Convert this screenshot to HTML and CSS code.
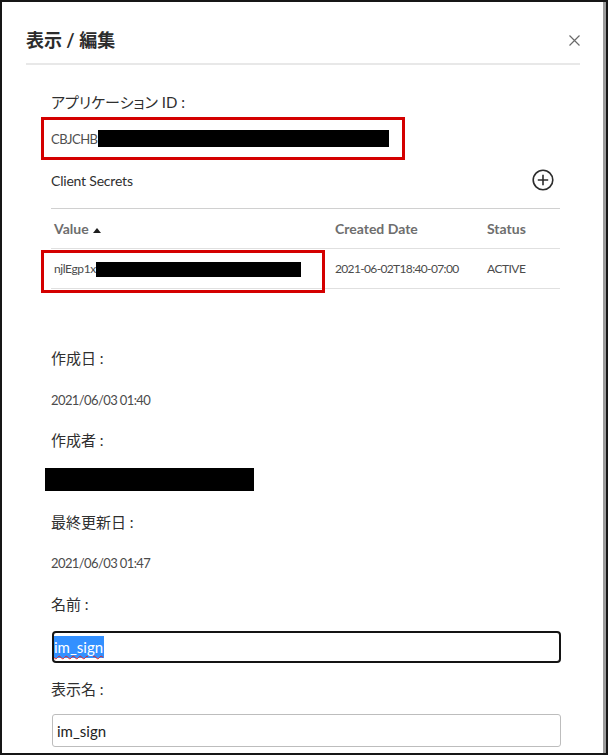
FILE: index.html
```html
<!DOCTYPE html>
<html lang="ja">
<head>
<meta charset="utf-8">
<title>表示 / 編集</title>
<link rel="stylesheet" href="styles.css">
</head>
<body>
<div class="frame">
  <div class="dialog">
    <div class="header">
      <h1 class="title">表示 / 編集</h1>
      <svg class="close" width="11" height="11" viewBox="0 0 11 11" aria-label="close">
        <path d="M0.5 0.5 L10.5 10.5 M10.5 0.5 L0.5 10.5" stroke="#6a6a6a" stroke-width="1.2" fill="none"/>
      </svg>
    </div>
    <div class="body">
      <div class="label first">アプリケーション ID :</div>
      <div class="idbox">
        <span class="idtext">CBJCHB</span><span class="redact r1"></span>
      </div>
      <div class="secrets-row">
        <span class="secrets">Client Secrets</span>
        <svg class="plus" width="22" height="22" viewBox="0 0 22 22" aria-label="add">
          <circle cx="11" cy="11" r="9.8" stroke="#2c2c2c" stroke-width="1.6" fill="none"/>
          <path d="M11 5.8 V16.2 M5.8 11 H16.2" stroke="#2c2c2c" stroke-width="1.6" fill="none"/>
        </svg>
      </div>
      <div class="table-wrap">
        <table class="tbl">
          <thead>
            <tr>
              <th class="c1">Value <span class="sort"></span></th>
              <th class="c2">Created Date</th>
              <th class="c3">Status</th>
            </tr>
          </thead>
          <tbody>
            <tr>
              <td class="c1"><span class="val">njlEgp1x</span><span class="redact r2"></span></td>
              <td class="c2 date">2021-06-02T18:40-07:00</td>
              <td class="c3 status">ACTIVE</td>
            </tr>
          </tbody>
        </table>
        <div class="mark"></div>
      </div>
      <div class="label l-created">作成日 :</div>
      <div class="value v-created">2021/06/03 01:40</div>
      <div class="label l-author">作成者 :</div>
      <div class="redact r3"></div>
      <div class="label l-updated">最終更新日 :</div>
      <div class="value v-updated">2021/06/03 01:47</div>
      <div class="label l-name">名前 :</div>
      <div class="field focused"><span class="selected">im_sign</span></div>
      <div class="label l-display">表示名 :</div>
      <div class="field plain">im_sign</div>
    </div>
  </div>
  <div class="strip"></div>
</div>
</body>
</html>
```

FILE: styles.css
```css
html, body {
  margin: 0;
  padding: 0;
  background: #ffffff;
}

.frame {
  width: 608px;
  height: 755px;
  box-sizing: border-box;
  border: 2px solid #161616;
  display: flex;
  overflow: hidden;
  font-family: Lato, "Noto Sans CJK JP", sans-serif;
}

.dialog {
  flex: 1;
  background: #ffffff;
  overflow: hidden;
}

.strip {
  width: 3px;
  background: #9b9b9b;
}

.header {
  margin: 0 23px 0 24px;
  padding: 26px 0 11px 0;
  border-bottom: 2px solid #e8e8e8;
  display: flex;
  align-items: center;
  justify-content: space-between;
}

.title {
  margin: 0;
  font-size: 18px;
  line-height: 24px;
  font-weight: 700;
  color: #2c2c2c;
}

.close {
  display: block;
}

.body {
  padding: 0 43px 0 49px;
}

.label {
  font-size: 15px;
  line-height: 30px;
  height: 30px;
  color: #2f2f2f;
}

.label.first {
  margin-top: 22px;
  font-feature-settings: "palt";
}

.idbox {
  margin-left: -10px;
  width: 364px;
  height: 43px;
  box-sizing: border-box;
  border: 3px solid #d40000;
  padding-left: 7px;
  display: flex;
  align-items: center;
}

.idtext {
  font-size: 13px;
  letter-spacing: -0.5px;
  color: #4f4f4f;
}

.redact {
  display: inline-block;
  background: #000000;
}

.r1 {
  width: 291px;
  height: 17px;
}

.secrets-row {
  margin-top: 5px;
  height: 30px;
  display: flex;
  align-items: center;
  justify-content: space-between;
}

.secrets {
  font-size: 14px;
  letter-spacing: -0.2px;
  color: #2f2f2f;
}

.plus {
  display: block;
  margin-right: 6px;
}

.table-wrap {
  position: relative;
  margin-top: 13px;
}

.tbl {
  width: 100%;
  border-collapse: collapse;
  table-layout: fixed;
  border-top: 1px solid #d0d0d0;
}

.tbl th,
.tbl td {
  text-align: left;
  padding: 0 0 0 3px;
  white-space: nowrap;
}

.tbl th {
  height: 39px;
  font-size: 14px;
  font-weight: 700;
  color: #6e6e6e;
  border-bottom: 1px solid #e0e0e0;
}

.tbl td {
  height: 39px;
  font-size: 12px;
  color: #4b4b4b;
  border-bottom: 1px solid #e0e0e0;
}

.tbl .c1 { width: 278px; }
.tbl .c2 { width: 149px; }

.tbl .date { letter-spacing: -0.65px; }
.tbl .status { letter-spacing: -0.5px; }

.sort {
  display: inline-block;
  width: 0;
  height: 0;
  border-left: 4px solid transparent;
  border-right: 4px solid transparent;
  border-bottom: 5px solid #1e1e1e;
  margin-left: 1px;
  vertical-align: middle;
}

.val {
  vertical-align: middle;
  letter-spacing: -0.4px;
}

.r2 {
  width: 205px;
  height: 15px;
  vertical-align: middle;
}

.mark {
  position: absolute;
  left: -10px;
  top: 42px;
  width: 284px;
  height: 43px;
  box-sizing: border-box;
  border: 3px solid #d40000;
}

.value {
  font-size: 13px;
  line-height: 30px;
  height: 30px;
  letter-spacing: -0.6px;
  color: #4b4b4b;
}

.l-created { margin-top: 54px; }
.v-created { margin-top: 12px; }
.l-author { margin-top: 10px; }

.r3 {
  display: block;
  margin-top: 13px;
  margin-left: -6px;
  width: 209px;
  height: 23px;
}

.l-updated { margin-top: 16px; }
.v-updated { margin-top: 11px; }
.l-name { margin-top: 11px; }

.field {
  margin-left: 1px;
  width: 509px;
  box-sizing: border-box;
  display: flex;
  align-items: center;
  font-size: 15px;
  color: #222222;
}

.field.focused {
  margin-top: 12px;
  height: 32px;
  border: 2px solid #141414;
  border-radius: 4px;
}

.selected {
  background: #3390ff;
  color: #ffffff;
  line-height: 22px;
  padding-right: 1px;
  text-decoration: underline wavy #e02020;
  text-decoration-thickness: 1px;
  text-underline-offset: 2px;
}

.l-display { margin-top: 11px; }

.field.plain {
  margin-top: 10px;
  height: 33px;
  border: 1px solid #bdbdbd;
  border-radius: 3px;
  padding-left: 4px;
}
```
